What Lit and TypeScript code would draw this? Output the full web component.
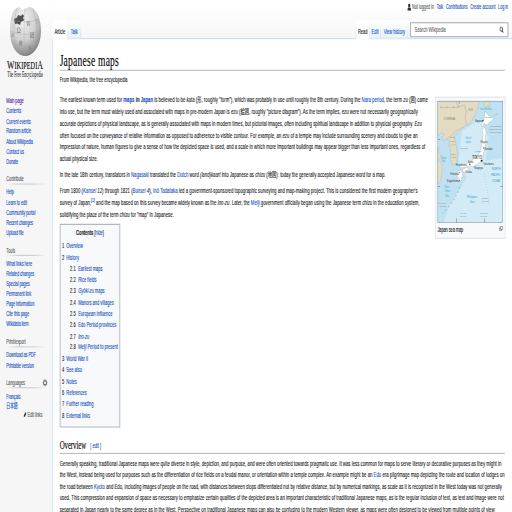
import { LitElement, html, css, svg } from "lit";
import { customElement } from "lit/decorators.js";

// Horizontal factor of the condensed page.
const SX = 512 / 1716;

type Item = [string, number];

const mainNav: Item[] = [["Main page", 17.3], ["Contents", 14.7], ["Current events", 24.3], ["Random article", 24.7], ["About Wikipedia", 26.7], ["Contact us", 17.7], ["Donate", 11.7]];
const groups: { title: Item; items: Item[] }[] = [
  { title: ["Contribute", 17.3], items: [["Help", 7.5], ["Learn to edit", 20.7], ["Community portal", 29], ["Recent changes", 26.7], ["Upload file", 17.3]] },
  { title: ["Tools", 9], items: [["What links here", 25.7], ["Related changes", 27.7], ["Special pages", 23.3], ["Permanent link", 24.7], ["Page information", 28], ["Cite this page", 22.7], ["Wikidata item", 22.3]] },
  { title: ["Print/export", 19.3], items: [["Download as PDF", 29.7], ["Printable version", 27.7]] },
  { title: ["Languages", 18.7], items: [["Français", 14], ["日本語", 11.3]] },
];

const toc: [string, unknown, number][] = [
  ["1", "Overview", 16.7], ["2", "History", 12.7],
  ["2.1", "Earliest maps", 24.3], ["2.2", "Rice fields", 18.5], ["2.3", html`<i>Gyōki-zu</i> maps`, 26.5],
  ["2.4", "Manors and villages", 35.5], ["2.5", "European influence", 34.3], ["2.6", "Edo Period provinces", 38],
  ["2.7", html`<i>Ino-zu</i>`, 11], ["2.8", "Meiji Period to present", 39.5],
  ["3", "World War II", 22], ["4", "See also", 15.7], ["5", "Notes", 10.7], ["6", "References", 20.7],
  ["7", "Further reading", 27.3], ["8", "External links", 23.7],
];

const intro: [unknown, number][][] = [
  [
    [html`The earliest known term used for <b><a>maps</a> in <a>Japan</a></b> is believed to be <i>kata</i> (形, roughly "form"), which was probably in use until roughly the 8th century. During the <a>Nara period</a>, the term <i>zu</i> (図) came`, 368],
    [html`into use, but the term most widely used and associated with maps in pre-modern Japan is <i>ezu</i> (絵図, roughly "picture diagram"). As the term implies, <i>ezu</i> were not necessarily geographically`, 358],
    [html`accurate depictions of physical landscape, as is generally associated with maps in modern times, but pictorial images, often including spiritual landscape in addition to physical geography. <i>Ezu</i>`, 362.2],
    [html`often focused on the conveyance of relative information as opposed to adherence to visible contour. For example, an <i>ezu</i> of a temple may include surrounding scenery and clouds to give an`, 358],
    [html`impression of nature, human figures to give a sense of how the depicted space is used, and a scale in which more important buildings may appear bigger than less important ones, regardless of`, 365.5],
    [html`actual physical size.`, 38],
  ],
  [[html`In the late 18th century, translators in <a>Nagasaki</a> translated the <a>Dutch</a> word <i>(land)kaart</i> into Japanese as <i>chizu</i> (地図): today the generally accepted Japanese word for a map.`, 326]],
  [
    [html`From 1800 (<i><a>Kansei</a> 12</i>) through 1821 (<i><a>Bunsei</a> 4</i>), <a>Inō Tadataka</a> led a government-sponsored topographic surveying and map-making project. This is considered the first modern geographer's`, 358],
    [html`survey of Japan;<sup><a>[1]</a></sup> and the map based on this survey became widely known as the <i>Ino-zu</i>. Later, the <a>Meiji</a> government officially began using the Japanese term <i>chizu</i> in the education system,`, 360],
    [html`solidifying the place of the term <i>chizu</i> for "map" in Japanese.`, 114],
  ],
];

const overview: [unknown, number][] = [
  [html`Generally speaking, traditional Japanese maps were quite diverse in style, depiction, and purpose, and were often oriented towards pragmatic use. It was less common for maps to serve literary or decorative purposes as they might in`, 441.8],
  [html`the West, instead being used for purposes such as the differentiation of rice fields on a feudal manor, or orientation within a temple complex. An example might be an <a>Edo</a> era pilgrimage map depicting the route and location of lodges on`, 445],
  [html`the road between <a>Kyoto</a> and Edo, including images of people on the road, with distances between stops differentiated not by relative distance, but by numerical markings, as scale as it is recognized in the West today was not generally`, 442.2],
  [html`used. This compression and expansion of space as necessary to emphasize certain qualities of the depicted area is an important characteristic of traditional Japanese maps, as is the regular inclusion of text, as text and image were not`, 444.2],
  [html`separated in Japan nearly to the same degree as in the West. Perspective on traditional Japanese maps can also be confusing to the modern Western viewer, as maps were often designed to be viewed from multiple points of view`, 435],
];

// Map labels: text, left x, baseline y, width, colour, font size.
const labels: [string, number, number, number, string, number][] = [
  ["CHINA", 41, 77, 34, "#8b8676", 12], ["RUS.", 115, 51, 14, "#8b8676", 9],
  ["Sapporo", 134, 83, 25, "#222", 11], ["Niigata", 151, 147, 21, "#444", 9], ["Sendai", 161, 167, 25, "#333", 11],
  ["TOKYO", 126, 194, 29, "#111", 14], ["Yokohama", 159, 212, 31, "#333", 10], ["Nagoya", 132, 224, 26, "#333", 9],
  ["Hiroshima", 77, 216, 32, "#333", 10], ["Kyoto", 113, 207, 16, "#333", 9], ["Osaka", 105, 237, 20, "#333", 9],
  ["Fukuoka", 60, 242, 27, "#333", 10], ["Kagoshima", 50, 262, 37, "#333", 10],
  ["Sea of", 106, 133, 17, "#39a9c9", 9], ["Japan", 106, 146, 16, "#39a9c9", 9],
  ["Sea of Okhotsk", 150, 47, 34, "#39a9c9", 8], ["Yellow", 33, 193, 15, "#39a9c9", 8], ["Sea", 35, 204, 10, "#39a9c9", 8],
  ["NORTH", 185, 227, 25, "#1d9cc2", 11], ["PACIFIC", 183, 245, 28, "#1d9cc2", 11], ["OCEAN", 185, 263, 24, "#1d9cc2", 11],
  ["East", 44, 280, 13, "#39a9c9", 9], ["China", 43, 294, 16, "#39a9c9", 9], ["Sea", 46, 308, 11, "#39a9c9", 9],
  ["Philippine", 110, 310, 31, "#2b9fc2", 11], ["Sea", 119, 325, 13, "#2b9fc2", 11],
  ["BONIN", 155, 313, 18, "#888", 7], ["ISLANDS", 155, 323, 20, "#888", 7],
  ["SAKISHIMA", 25, 328, 24, "#888", 7], ["ISLANDS", 28, 338, 20, "#888", 7],
  ["DAITO", 90, 358, 18, "#888", 7], ["ISLANDS", 89, 368, 20, "#888", 7],
  ["VOLCANO", 148, 358, 24, "#888", 7], ["ISLANDS", 150, 368, 20, "#888", 7],
  ["NORTH", 59, 132, 18, "#888", 7], ["KOREA", 59, 142, 17, "#888", 7], ["SOUTH", 62, 182, 18, "#888", 7], ["KOREA", 63, 192, 17, "#888", 7],
  ["Kuril Islands", 180, 97, 32, "#777", 7], ["occupied since 1945", 175, 106, 39, "#777", 7], ["claimed by Japan", 178, 115, 35, "#777", 7],
  ["Hokkaido", 162, 71, 22, "#777", 7], ["Honshu", 133, 174, 20, "#777", 7], ["Takeshima", 90, 163, 22, "#777", 7],
];

@customElement("app-root")
export class AppRoot extends LitElement {
  static styles = css`
    :host { display: block; width: 512px; height: 512px; overflow: hidden; background: #fff; }
    .page { width: 1716px; height: 991px; overflow: hidden; display: flex; background: #f6f6f6; transform-origin: 0 0; transform: scale(0.29837, 0.517); font: 14.3px/22.4px "Liberation Sans", "Noto Sans CJK JP", sans-serif; color: #202122; -webkit-text-stroke: 0.22px; }
    a { color: #1250c2; }
    .fit { display: inline-block; white-space: nowrap; }
    .side { width: 176px; flex: none; background: linear-gradient(#fff 10px, #f6f6f6 76px); font-size: 13.1px; }
    .logo { height: 185.6px; }
    .logo svg { display: block; width: 176px; height: 160px; -webkit-text-stroke: 0; }
    .nav { padding-left: 21px; }
    .row { height: 19.5px; line-height: 19.5px; }
    .visited { color: #3c1aa0; }
    .side h3 { margin: 15px 0 5.4px -3px; padding-left: 3px; width: 136px; height: 20px; line-height: 20px; font-size: 13.1px; font-weight: 400; color: #54595d; display: flex; justify-content: space-between; background: linear-gradient(90deg, #c8ccd100, #c8ccd1 33%, #c8ccd1 66%, #c8ccd100) 0 100%/100% 2px no-repeat; }
    .gear { width: 18px; height: 15px; margin: 2px -3px 0 0; }
    .editlinks { color: #54595d; padding-left: 58px; height: 16px; line-height: 16px; margin-top: -2px; display: flex; align-items: center; gap: 3px; }
    .editlinks svg { width: 10px; height: 10px; }
    .main { flex: 1; min-width: 0; display: flex; flex-direction: column; }
    .head { height: 76px; flex: none; display: flex; flex-direction: column; justify-content: space-between; background: linear-gradient(#fff 10px, #f6f6f6); border-bottom: 2px solid #b6dcf6; box-sizing: border-box; }
    .personal { display: flex; justify-content: flex-end; gap: 9px; padding-right: 13px; height: 28px; line-height: 28px; font-size: 12.5px; }
    .who { display: flex; align-items: center; gap: 3px; color: #54595d; }
    .who svg { width: 13px; height: 14px; }
    .tabs { display: flex; height: 38px; margin-bottom: -2px; font-size: 13.4px; line-height: 46px; }
    .tab { box-sizing: border-box; height: 38px; text-align: center; border-right: 2px solid; border-image: linear-gradient(#fff, #b6dcf6) 1; background: linear-gradient(#fff, #e8f2f8); }
    .tab.link { height: 36px; }
    .tab.on { background: #fff; color: #222; }
    .t1 { width: 51px; } .t2 { width: 45px; }
    .t3 { width: 47px; margin-left: auto; border-left: 2px solid; } .t4 { width: 38px; } .t5 { width: 91px; }
    .search { box-sizing: border-box; width: 330px; height: 29px; margin: 5px 12px 0 6px; border: 2px solid #a2a9b1; border-left-width: 3px; border-right-width: 3px; border-radius: 2px; background: #fff; line-height: 26px; padding: 0 13px; display: flex; justify-content: space-between; align-items: center; color: #666; }
    .search svg { width: 14px; height: 13px; }
    .body { flex: 1; background: #fff; border-left: 2px solid #b6dcf6; margin-left: -1px; padding: 22px 24px 0 23px; }
    h1, h2 { font-family: "Liberation Serif", serif; font-weight: 400; margin: 0; color: #000; }
    h1 { height: 37px; font-size: 32px; line-height: 39px; border-bottom: 2px solid #b5b8bd; }
    .from { font-size: 13.3px; height: 20px; line-height: 20px; margin-top: 7px; }
    .top { display: flex; justify-content: space-between; align-items: flex-start; margin-top: 17px; }
    .p { margin-bottom: 7.3px; }
    .ln { height: 23px; line-height: 23px; white-space: nowrap; }
    sup { font-size: 11.5px; line-height: 1; vertical-align: 5px; }
    .toc { box-sizing: border-box; width: 203px; height: 394px; background: #f8f9fa; border: 2px solid #b4b8bd; border-left-width: 3px; border-right-width: 3px; margin-top: 0; padding: 6px 0 0 5px; font-size: 13.6px; }
    .toc .ttl { text-align: center; height: 24px; line-height: 20px; padding-right: 5px; }
    .e { display: flex; height: 21.85px; line-height: 21.85px; white-space: nowrap; }
    .n { width: 14px; } .sub { padding-left: 27px; } .sub .n { width: 27px; }
    .thumb { box-sizing: border-box; width: 236px; height: 275px; margin: 6px -2px 0 0; border: 2px solid #dfe2e6; background: #f8f9fa; padding: 6px; font-size: 13.2px; }
    .thumb .map { display: block; width: 220px; height: 236px; -webkit-text-stroke: 0; }
    .cap { display: flex; justify-content: space-between; align-items: center; height: 28px; }
    .cap svg { width: 13px; height: 10px; margin-top: -6px; }
    h2 { font-size: 23px; height: 32px; line-height: 34px; border-bottom: 2px solid #b5b8bd; margin-top: 17px; display: flex; }
    .ed { font: 13.3px/37px "Liberation Sans", sans-serif; color: #54595d; margin-left: 14px; }
    .ov { margin-top: 7px; }
    .ov .ln { height: 22.4px; line-height: 22.4px; }
  `;

  // Tracks each run of text so that it fills its measured width.
  firstUpdated() {
    this.renderRoot.querySelectorAll<HTMLElement>(".fit").forEach((el) => {
      const n = (el.textContent ?? "").length;
      el.style.letterSpacing = `${(Number(el.dataset.w) / SX - el.offsetWidth) / n}px`;
    });
  }

  fit(t: unknown, w: number) {
    return html`<span class="fit" data-w=${w}>${t}</span>`;
  }

  line = ([t, w]: [unknown, number]) => html`<div class="ln">${this.fit(t, w)}</div>`;
  row = ([t, w]: Item) => html`<div class="row"><a class=${t === "Main page" ? "visited" : ""}>${this.fit(t, w)}</a></div>`;

  logo() {
    return html`<svg viewBox="0 0 52.5 82.7" preserveAspectRatio="none">
      <defs><radialGradient id="g" cx=".4" cy=".25" r=".8"><stop offset="0" stop-color="#f4f4f4"/><stop offset=".55" stop-color="#cfcfcf"/><stop offset="1" stop-color="#777"/></radialGradient></defs>
      <path d="M12 14C14 10 15 8 17 8L19 7L22 10L26 8L30 7C37 9 41 19 41 31C41 45 34 56 25.500 56S10 46 10 31C10 24 11 18 12 14Z" fill="url(#g)"/>
      <path d="M14 19L17 17.500L18 15L21 16L22.500 14L24 16L23 18L24.500 20L21 22L20 25L17 23.500L15 24Z" fill="#505050"/>
      <g fill="none" stroke="#a2a2a2" stroke-width=".35"><path d="M17 8Q11 28 17 51M25 9Q23 30 25 56M33 9Q40 30 33 51M11 19Q25 25 39 19M10 31Q25 38 41 31M12 43Q25 50 39 43"/></g>
      <g font-family="DejaVu Serif, serif" fill="#666" font-size="7.500">
        <text x="16.700" y="33.500" textLength="4" lengthAdjust="spacingAndGlyphs">Ω</text><text x="26.300" y="26" font-size="7" textLength="4.200" lengthAdjust="spacingAndGlyphs">W</text>
        <text x="29.700" y="38.500" textLength="4.300" lengthAdjust="spacingAndGlyphs">И</text><text x="18.500" y="45" font-size="6" textLength="3.500" lengthAdjust="spacingAndGlyphs">維</text>
        <text x="11.500" y="37" font-size="5" textLength="2.200" lengthAdjust="spacingAndGlyphs">И</text><text x="35.500" y="24" font-size="6" textLength="2.200" lengthAdjust="spacingAndGlyphs">7</text>
        <text x="28.500" y="50" font-size="5" textLength="2.600" lengthAdjust="spacingAndGlyphs">N</text></g>
      <g font-family="Liberation Serif, serif" fill="#000" stroke="#000" stroke-width=".08">
        <text y="69" font-size="10" textLength="36" x="7" lengthAdjust="spacingAndGlyphs"><tspan font-size="12.500">W</tspan>IKIPEDI<tspan font-size="12.500">A</tspan></text>
        <text x="7.300" y="77.300" font-size="7.600" textLength="35.500" lengthAdjust="spacingAndGlyphs" stroke="none">The Free Encyclopedia</text></g>
    </svg>`;
  }

  map() {
    return html`<svg class="map" viewBox="22 20 196 365" preserveAspectRatio="none">
      <rect x="22" y="20" width="196" height="365" fill="#bfe1f2"/>
      <path d="M95 110L150 75L175 130L165 200L218 190V385H40L60 330L110 250L85 200Z" fill="#d3ebf7"/>
      <path d="M22 20H146L143 42L134 62L120 88L106 94L92 107L82 116L72 127L78 151L82 181L80 205L66 214L61 190L62 166L55 153L59 142L51 134L40 139L34 132L43 120L34 115L22 128Z" fill="#e3dcc3" stroke="#80b9cf" stroke-width="1"/>
      <path d="M162 20H178L177 39L170 33L167 47L161 36Z" fill="#e3dcc3" stroke="#80b9cf"/>
      <path d="M22 158L28 163L24 175L34 185L27 198L37 210L36 232L32 258L22 270Z" fill="#e3dcc3" stroke="#80b9cf"/>
      <path d="M76 20L85 38L103 33L108 51L105 70L110 92M52 134L76 112L98 99M58 153L77 151" fill="none" stroke="#bda9a4" stroke-width="1.500"/>
      <g fill="#fffef8" stroke="#92a5ad" stroke-width="1">
        <path d="M164 51L174 63L190 72L184 81L176 85L171 93L161 88L157 98L152 92L161 76Z"/>
        <path d="M155 103L164 100L168 116L165 130L167 147L164 163L159 179L156 197L151 205L145 205L142 213L135 211L131 219L123 214L111 217L102 220L88 220L91 213L105 210L113 206L124 202L130 190L140 190L149 172L155 148L158 125Z"/>
        <path d="M97 225L110 219L117 224L107 233L99 235ZM84 229L94 227L98 240L92 260L85 262L83 247L79 236Z"/>
      </g>
      <g fill="none" stroke="#8298a2"><path d="M162 238Q170 280 178 335" stroke-dasharray="3 5"/><path d="M88 278Q78 315 37 357" stroke-dasharray="5 8" stroke-width="2"/><path d="M32 40H84M32 35V42M51 35V42M70 35V42M84 35V42M190 66L204 57"/></g>
      <g fill="#4e9fb8"><path d="M22 275h8v2h-8zM210 275h8v2h-8zM78 372h2v13h-2zM162 372h2v13h-2zM86 20h2v9h-2zM22 135h8v2h-8z"/></g>
      <g fill="#222"><circle cx="154" cy="199" r="3"/><circle cx="158" cy="79" r="1.500"/><circle cx="160" cy="161" r="1.500"/><circle cx="119" cy="210" r="2"/><circle cx="87" cy="234" r="1.500"/><circle cx="88" cy="258" r="1.500"/></g>
      <g font-family="Liberation Sans, sans-serif">${labels.map(([t, x, y, w, c, s]) => svg`<text x=${x} y=${y} textLength=${w} lengthAdjust="spacingAndGlyphs" fill=${c} font-size=${s}>${t}</text>`)}</g>
      <rect x="22.500" y="21" width="195" height="363" fill="none" stroke="#78909b" stroke-width="2"/>
    </svg>`;
  }

  render() {
    return html`<div class="page">
      <aside class="side">
        <div class="logo">${this.logo()}</div>
        <nav class="nav">
          ${mainNav.map(this.row)}
          ${groups.map((g) => html`<h3>${this.fit(...g.title)}${g.title[0] === "Languages" ? html`<svg class="gear" viewBox="0 0 20 20" preserveAspectRatio="none"><circle cx="10" cy="10" r="5.500" fill="none" stroke="#54595d" stroke-width="2.500"/><path d="M10 1v4M10 15v4M1 10h4M15 10h4M4 4l3 3M13 13l3 3M4 16l3-3M13 7l3-3" stroke="#54595d" stroke-width="2.500"/></svg>` : ""}</h3>${g.items.map(this.row)}`)}
          <div class="editlinks"><svg viewBox="0 0 10 10"><path d="M0 10l1-4 6-6 3 3-6 6z" fill="#333"/></svg>${this.fit("Edit links", 14.7)}</div>
        </nav>
      </aside>
      <div class="main">
        <header class="head">
          <div class="personal">
            <span class="who"><svg viewBox="0 0 13 15"><circle cx="6.500" cy="4" r="4" fill="#333"/><path d="M0 15v-3q0-4 4-4h5q4 0 4 4v3z" fill="#333"/></svg>${this.fit("Not logged in", 22)}</span>
            <a>${this.fit("Talk", 6.5)}</a><a>${this.fit("Contributions", 21.7)}</a><a>${this.fit("Create account", 25.3)}</a><a>${this.fit("Log in", 10)}</a>
          </div>
          <div class="tabs">
            <div class="tab on t1">${this.fit("Article", 10.8)}</div><div class="tab link t2"><a>${this.fit("Talk", 7)}</a></div>
            <div class="tab on t3">${this.fit("Read", 9.5)}</div><div class="tab link t4"><a>${this.fit("Edit", 7)}</a></div><div class="tab link t5"><a>${this.fit("View history", 21.3)}</a></div>
            <div class="search">${this.fit("Search Wikipedia", 31)}<svg viewBox="0 0 17 17" preserveAspectRatio="none"><circle cx="7" cy="7" r="5.500" fill="none" stroke="#333" stroke-width="2.500"/><path d="M11 11L16 16" stroke="#333" stroke-width="3"/></svg></div>
          </div>
        </header>
        <main class="body">
          <h1>${this.fit("Japanese maps", 59.3)}</h1>
          <div class="from">${this.fit("From Wikipedia, the free encyclopedia", 67.8)}</div>
          <div class="top">
            <div>
              ${intro.map((p) => html`<div class="p">${p.map(this.line)}</div>`)}
              <div class="toc">
                <div class="ttl">${this.fit(html`<b>Contents</b> [<a>hide</a>]`, 27.7)}</div>
                ${toc.map(([n, t, w]) => html`<div class="e ${n.length > 1 ? "sub" : ""}"><span class="n">${n}</span><a>${this.fit(t, w)}</a></div>`)}
              </div>
            </div>
            <div class="thumb">${this.map()}
              <div class="cap">${this.fit("Japan sea map", 25.7)}<svg viewBox="0 0 14 11"><path d="M4 1h9v6H4zM4 4H1v6h8V7" fill="none" stroke="#555" stroke-width="1.500"/></svg></div>
            </div>
          </div>
          <h2>${this.fit("Overview", 26.5)}<span class="ed">${this.fit(html`[ <a>edit</a> ]`, 10.7)}</span></h2>
          <div class="ov">${overview.map(this.line)}</div>
        </main>
      </div>
    </div>`;
  }
}
